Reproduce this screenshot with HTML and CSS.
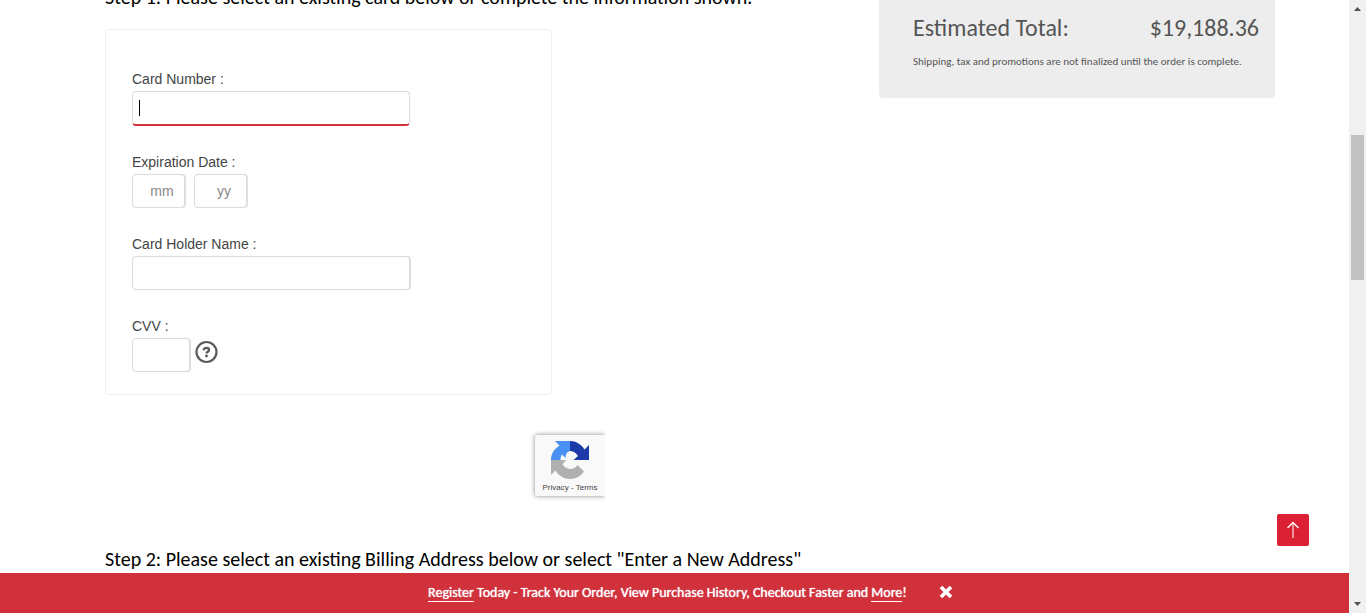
FILE: index.html
```html
<!DOCTYPE html>
<html lang="en">
<head>
<meta charset="utf-8">
<title>Checkout - Payment</title>
<link rel="stylesheet" href="styles.css">
</head>
<body>
<div class="view">
  <div class="page">
    <main class="checkout">
      <section class="payment">
        <h2 class="step">Step 1: Please select an existing card below or complete the information shown.</h2>
        <form class="card-form">
          <div class="field">
            <label for="card-number">Card Number :</label>
            <div class="caret-box"><input class="input input-wide input-active" id="card-number" type="text"></div>
          </div>
          <div class="field">
            <label for="exp-month">Expiration Date :</label>
            <div class="field-row">
              <input class="input input-date" id="exp-month" type="text" placeholder="mm">
              <input class="input input-date" id="exp-year" type="text" placeholder="yy" aria-label="Expiration year">
            </div>
          </div>
          <div class="field">
            <label for="holder">Card Holder Name :</label>
            <input class="input input-wide" id="holder" type="text">
          </div>
          <div class="field">
            <label for="cvv">CVV :</label>
            <div class="field-row cvv-row">
              <input class="input input-cvv" id="cvv" type="text">
              <button class="help" type="button" aria-label="What is a CVV?">
                <svg width="24" height="24" viewBox="0 0 24 24"><circle cx="12.500" cy="12" r="10" fill="none" stroke="#5a5a5a" stroke-width="2.200"/><path d="M9.800 10.300c0-1.600 1-2.500 2.700-2.500s2.600.9 2.600 2.200c0 1.800-2.600 1.700-2.600 3.500" fill="none" stroke="#5a5a5a" stroke-width="2.300"/><circle cx="12.500" cy="16" r="1.400" fill="#5a5a5a"/></svg>
              </button>
            </div>
          </div>
        </form>
        <div class="captcha-clip">
          <div class="captcha">
            <svg class="captcha-logo" width="38" height="38" viewBox="0 0 38 38">
              <path d="M19 0H4l4.500 4.500C3 8 0 13 0 19h9.500c0-2 .5-4 1.500-5.500l3.500 3.500c0-4 1.500-6.500 4.500-7z" fill="#4a90f3"/>
              <path d="M19 0v10c2.500 0 4.500 1 6 2.500l2 2.500-4.500 4H38V4l-4.500 4.500C30 3 25 0 19 0z" fill="#1c3aa9"/>
              <path d="M0 19v15l4.500-4.500C8 35 13 38 19 38c6 0 11-3 14-7.500l-6.500-6.500c-1 1.500-2 2.500-3.500 3.200-2 .9-5 .9-7 0-2-1-3.500-2.200-4.500-3.700L15 19z" fill="#b0b0b0"/>
            </svg>
            <div class="captcha-links"><a href="#privacy">Privacy</a> - <a href="#terms">Terms</a></div>
          </div>
        </div>
        <h2 class="step">Step 2: Please select an existing Billing Address below or select "Enter a New Address"</h2>
      </section>
      <aside class="summary">
        <div class="total"><span>Estimated Total:</span><span>$19,188.36</span></div>
        <p class="note">Shipping, tax and promotions are not finalized until the order is complete.</p>
      </aside>
    </main>
    <a class="to-top" href="#top" aria-label="Back to top">
      <svg width="16" height="20" viewBox="0 0 16 20" fill="none" stroke="#fff" stroke-width="1.400"><path d="M8 18V3" stroke-opacity=".75"/><path d="M2.500 8L8 2.500 13.500 8"/></svg>
    </a>
    <div class="banner">
      <p class="banner-text"><a href="#register">Register</a> Today - Track Your Order, View Purchase History, Checkout Faster and <a href="#more">More</a>!</p>
      <button class="close" type="button" aria-label="Close">
        <svg width="14" height="14" viewBox="0 0 14 14"><path d="M2 2l10 10M12 2L2 12" stroke="#fff" stroke-width="3.800"/></svg>
      </button>
    </div>
  </div>
  <div class="scrollbar" aria-hidden="true">
    <svg width="7" height="4" viewBox="0 0 7 4"><path d="M0 4L3.500 0 7 4z" fill="#505050"/></svg>
    <div class="track"><div class="thumb"></div></div>
    <svg width="7" height="4" viewBox="0 0 7 4"><path d="M0 0h7L3.500 4z" fill="#505050"/></svg>
  </div>
</div>
</body>
</html>
```
FILE: styles.css
```css
* { box-sizing: border-box; }
body { margin: 0; background: #fff; font-family: Carlito, Lato, sans-serif; color: #000; }
.view { display: flex; height: 100vh; overflow: hidden; }
.page { position: relative; flex: 1; min-width: 0; overflow: hidden; }
.checkout { display: flex; justify-content: space-between; align-items: flex-start; padding: 0 74px 0 105px; }
.payment { margin-top: -15px; }
.step { margin: 0; font-size: 20px; line-height: 24px; font-weight: 400; white-space: nowrap; }

.card-form { display: flex; flex-direction: column; gap: 26px; width: 447px; margin-top: 20px; padding: 39px 26px 22px; border: 1px solid #eee; border-radius: 4px; }
.field { display: flex; flex-direction: column; align-items: flex-start; gap: 4px; }
.field label { font: 14px/16px "Liberation Sans", Arial, sans-serif; color: #444; padding-top: 2px; }
.field-row { display: flex; gap: 9px; }
.cvv-row { gap: 4px; }
.input { height: 34px; padding: 0 6px; border: 1px solid #dcdcdc; border-radius: 4px; box-shadow: 1px 0 1px #ddd; background: #fff; font: 14px "Liberation Sans", Arial, sans-serif; outline: none; }
.input::placeholder { color: #888; }
.input-wide { width: 278px; }
.input-date { width: 53px; padding: 0 0 0 7px; text-align: center; }
.input-cvv { width: 58px; }
.input-active { display: block; height: 35px; border-bottom: 2px solid #d0313a; box-shadow: none; }
.caret-box { position: relative; }
.caret-box::after { content: ""; position: absolute; left: 7px; top: 9px; width: 1px; height: 16px; background: #000; }
.help { width: 24px; height: 24px; margin-top: 2px; padding: 0; border: 0; background: none; }
.help svg { display: block; }

.captcha-clip { width: 500px; margin-top: 32px; padding: 8px 0; overflow: hidden; display: flex; justify-content: flex-end; }
.captcha { display: flex; flex-direction: column; align-items: center; width: 70px; height: 61px; padding-top: 6px; border-radius: 2px 0 0 2px; background: #f9f9f9; box-shadow: 0 0 5px #888; }
.captcha-links { margin-top: 4px; font: 8px/10px "Liberation Sans", Arial, sans-serif; color: #444; white-space: nowrap; }
.captcha-links a { color: inherit; text-decoration: none; }
.captcha-clip + .step { margin-top: 43px; }

.summary { width: 396px; padding: 13px 16px 28px 34px; border-radius: 0 0 4px 4px; background: #ededed; color: #555; }
.total { display: flex; justify-content: space-between; font-size: 24px; line-height: 30px; }
.note { margin: 11px 0 0; font-size: 11px; line-height: 16px; white-space: nowrap; }

.to-top { position: absolute; right: 40px; bottom: 67px; display: flex; align-items: center; justify-content: center; width: 32px; height: 32px; border-radius: 2px; background: #da2032; }
.banner { position: absolute; left: 0; right: 0; bottom: 0; display: flex; align-items: center; justify-content: center; gap: 32px; height: 40px; padding-left: 32px; background: #d0313a; color: #fff; }
.banner-text { margin: 0; font-size: 14px; line-height: 16px; font-weight: 400; text-shadow: 0 0 1px #fff; white-space: nowrap; }
.banner-text a { color: inherit; text-decoration: none; border-bottom: 1px solid #fff; }
.close { width: 14px; height: 14px; margin-bottom: 2px; padding: 0; border: 0; background: none; }
.close svg { display: block; }

.scrollbar { display: flex; flex-direction: column; align-items: center; width: 17px; padding: 7px 0; background: #f0f0f0; }
.track { flex: 1; padding-top: 124px; }
.thumb { width: 13px; height: 145px; background: #c1c1c1; }
```
